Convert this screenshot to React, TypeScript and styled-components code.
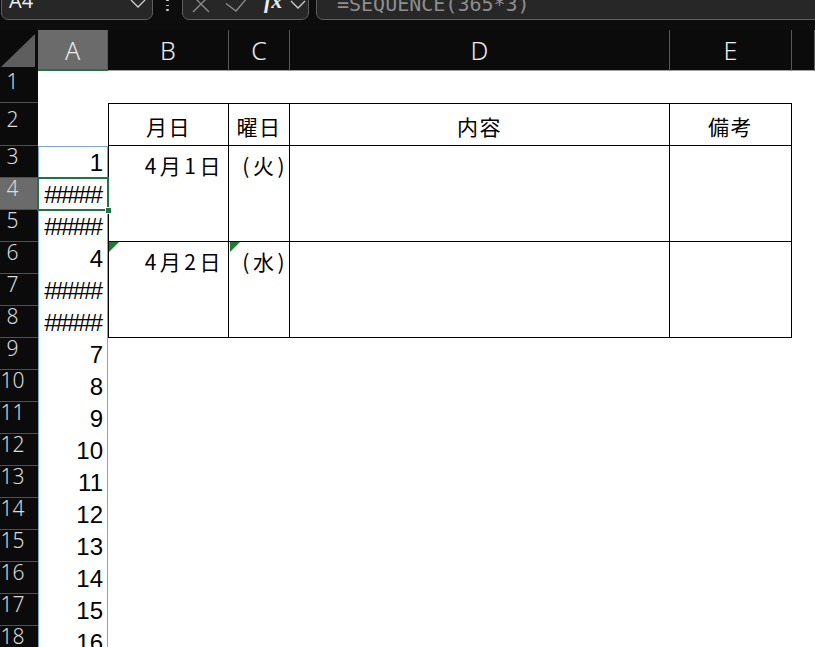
import React from 'react';
import styled, { createGlobalStyle, css } from 'styled-components';

const GlobalStyle = createGlobalStyle`
  html, body {
    margin: 0;
    padding: 0;
    background: #0d0d0d;
    overflow: hidden;
  }
`;

// column widths: row heads, A, B, C, D, E, F...
const COLS = '38px 70px 121px 61px 380px 122px 1fr';

const Window = styled.div`
  width: 815px;
  height: 647px;
  overflow: hidden;
  background: #0d0d0d;
  display: flex;
  flex-direction: column;
`;

/* ---------- formula bar ---------- */

const FormulaBar = styled.div`
  flex: none;
  height: 20px;
  display: flex;
  align-items: flex-end;
  overflow: hidden;
  padding-left: 1px;
`;

const Field = styled.div<{ $width?: number }>`
  box-sizing: border-box;
  flex: ${p => (p.$width ? `0 0 ${p.$width}px` : '1 1 auto')};
  height: 32px;
  display: flex;
  align-items: flex-end;
  background: #272727;
  border: 1px solid #5f5f5f;
  border-radius: 7px;
`;

const NameText = styled.span`
  padding-left: 7px;
  margin-bottom: 8px;
  font: 400 20px/20px 'Open Sans', 'Noto Sans', sans-serif;
  color: #f2f2f2;
`;

const Chevron = styled.svg<{ $right: number; $bottom: number }>`
  flex: none;
  margin-left: auto;
  margin-right: ${p => p.$right}px;
  margin-bottom: ${p => p.$bottom}px;
`;

const Ellipsis = styled.div`
  flex: 0 0 29px;
  align-self: stretch;
  box-sizing: border-box;
  display: flex;
  flex-direction: column;
  align-items: center;
  justify-content: flex-end;
  gap: 3.5px;
  padding-bottom: 9.5px;
`;

const Dot = styled.span`
  width: 3px;
  height: 3px;
  border-radius: 1px;
  background: #d0d0d0;
`;

const ToolIcon = styled.svg<{ $left: number; $bottom: number }>`
  flex: none;
  margin-left: ${p => p.$left}px;
  margin-bottom: ${p => p.$bottom}px;
`;

const FxLabel = styled.span`
  margin-left: 17px;
  margin-bottom: 7px;
  font: italic 700 22px/22px 'Liberation Serif', 'DejaVu Serif', serif;
  color: #ececec;
`;

const FormulaField = styled(Field)`
  margin-left: 7px;
  margin-right: -20px;
`;

const FormulaText = styled.span`
  padding-left: 20px;
  margin-bottom: 5px;
  font: 400 20px/20px 'DejaVu Sans Mono', monospace;
  color: #8e8e8e;
  white-space: nowrap;
`;

/* ---------- column headings ---------- */

const ColumnHeads = styled.div`
  flex: none;
  display: grid;
  grid-template-columns: ${COLS};
  height: 41px;
  margin-top: 10px;
  background: #0b0b0b;
`;

const Corner = styled.div`
  display: flex;
`;

const ColHead = styled.div<{ $active?: boolean }>`
  box-sizing: border-box;
  display: flex;
  align-items: center;
  justify-content: center;
  background: ${p => (p.$active ? '#6b6b6b' : 'transparent')};
  border-right: 1px solid #595959;
  border-bottom: ${p => (p.$active ? '2px solid #217346' : '1px solid #a3a3a3')};
  font: 300 25px 'Noto Sans', 'Open Sans', sans-serif;
  color: #ececec;
`;

/* ---------- cells ---------- */

const SheetBody = styled.div`
  flex: 1;
  min-height: 0;
  overflow: hidden;
  display: grid;
  grid-template-columns: ${COLS};
  grid-template-rows: 32px 43px repeat(16, 32px);
  background: #ffffff;
`;

const RowHead = styled.div<{ $row: number; $active?: boolean }>`
  grid-column: 1;
  grid-row: ${p => p.$row};
  box-sizing: border-box;
  display: flex;
  align-items: center;
  justify-content: center;
  padding: 0 13px 10px 0;
  background: ${p => (p.$active ? '#6b6b6b' : '#0b0b0b')};
  border-bottom: 1px solid #4f4f4f;
  font: 300 21px/21px 'Noto Sans', 'Open Sans', sans-serif;
  color: #dadada;
`;

const SpillRange = styled.div`
  grid-column: 2;
  grid-row: 3 / span 16;
  display: flex;
  flex-direction: column;
  box-shadow: inset 1px 1px 0 #7aa6da, inset -1px 0 0 #7aa6da;
`;

const ValueCell = styled.div<{ $active?: boolean; $hashed?: boolean }>`
  position: relative;
  flex: 0 0 32px;
  box-sizing: border-box;
  display: flex;
  align-items: flex-end;
  justify-content: flex-end;
  padding: 0 ${p => (p.$hashed ? '7px' : '5px')} 2px 0;
  font: 400 24px/26px 'Liberation Sans', Arial, sans-serif;
  letter-spacing: ${p => (p.$hashed ? '-2px' : '0')};
  color: #000;

  ${p =>
    p.$active &&
    css`
      z-index: 1;
      box-shadow: 0 0 0 1px #217346, inset 0 0 0 1px #217346;

      &::after {
        content: '';
        position: absolute;
        right: -3px;
        bottom: -3px;
        width: 5px;
        height: 5px;
        background: #217346;
        outline: 1px solid #ffffff;
      }
    `}
`;

const HeadCell = styled.div<{ $col: number; $lead?: boolean }>`
  grid-column: ${p => p.$col};
  grid-row: 2;
  box-sizing: border-box;
  display: flex;
  align-items: center;
  justify-content: center;
  padding-top: 4px;
  border-top: 1px solid #000;
  border-right: 1px solid #000;
  border-bottom: 1px solid #000;
  border-left: ${p => (p.$lead ? '1px solid #000' : 'none')};
  font: 400 21px/1 'Noto Sans CJK JP', 'Noto Sans', sans-serif;
  letter-spacing: 1.5px;
  color: #000;
`;

const BodyCell = styled.div<{ $col: number; $row: number; $lead?: boolean; $pad?: number; $flag?: boolean }>`
  position: relative;
  grid-column: ${p => p.$col};
  grid-row: ${p => p.$row} / span 3;
  box-sizing: border-box;
  padding: 9px ${p => p.$pad ?? 4}px 0 0;
  border-right: 1px solid #000;
  border-bottom: 1px solid #000;
  border-left: ${p => (p.$lead ? '1px solid #000' : 'none')};
  text-align: right;
  font: 400 21px/1 'Noto Sans CJK JP', 'Noto Sans', sans-serif;
  letter-spacing: 3.5px;
  color: #000;

  ${p =>
    p.$flag &&
    css`
      &::before {
        content: '';
        position: absolute;
        top: 0;
        left: ${p.$lead ? '0' : '1px'};
        width: 0;
        height: 0;
        border-top: 10px solid #1e7b2e;
        border-right: 10px solid transparent;
      }
    `}
`;

const columns = ['A', 'B', 'C', 'D', 'E', ''];
const rowNumbers = Array.from({ length: 18 }, (_, i) => i + 1);

// SEQUENCE(365*3) spilled down column A from row 3
const spillValues = ['1', '#####', '#####', '4', '#####', '#####', '7', '8', '9', '10', '11', '12', '13', '14', '15', '16'];

const schedule = [
  { row: 3, date: '4月1日', day: '(火)', flag: false },
  { row: 6, date: '4月2日', day: '(水)', flag: true },
];

const Down = ({ right, bottom }: { right: number; bottom: number }) => (
  <Chevron $right={right} $bottom={bottom} width="16" height="10" viewBox="0 0 16 10">
    <polyline points="1,1 8,8 15,1" fill="none" stroke="#cfcfcf" strokeWidth="1.3" />
  </Chevron>
);

const App: React.FC = () => {
  return (
    <Window>
      <GlobalStyle />
      <FormulaBar>
        <Field $width={152}>
          <NameText>A4</NameText>
          <Down right={6} bottom={10} />
        </Field>
        <Ellipsis>
          <Dot />
          <Dot />
          <Dot />
        </Ellipsis>
        <Field $width={127}>
          <ToolIcon $left={9} $bottom={6} width="18" height="18" viewBox="0 0 18 18">
            <path d="M1 1 L17 17 M17 1 L1 17" stroke="#8a8a8a" strokeWidth="1.4" fill="none" />
          </ToolIcon>
          <ToolIcon $left={15} $bottom={7} width="22" height="22" viewBox="0 0 22 22">
            <polyline points="1,13.5 11,21 22,8" stroke="#8a8a8a" strokeWidth="1.4" fill="none" />
          </ToolIcon>
          <FxLabel>fx</FxLabel>
          <Down right={2} bottom={9} />
        </Field>
        <FormulaField>
          <FormulaText>=SEQUENCE(365*3)</FormulaText>
        </FormulaField>
      </FormulaBar>

      <ColumnHeads>
        <Corner>
          <svg width="38" height="41" viewBox="0 0 38 41">
            <polygon points="1,37 35,37 35,4" fill="#5e5e5e" />
          </svg>
        </Corner>
        {columns.map((c, i) => (
          <ColHead key={i} $active={c === 'A'}>{c}</ColHead>
        ))}
      </ColumnHeads>

      <SheetBody>
        {rowNumbers.map(n => (
          <RowHead key={n} $row={n} $active={n === 4}>{n}</RowHead>
        ))}

        <SpillRange>
          {spillValues.map((v, i) => (
            <ValueCell key={i} $active={i === 1} $hashed={v.startsWith('#')}>{v}</ValueCell>
          ))}
        </SpillRange>

        <HeadCell $col={3} $lead>月日</HeadCell>
        <HeadCell $col={4}>曜日</HeadCell>
        <HeadCell $col={5}>内容</HeadCell>
        <HeadCell $col={6}>備考</HeadCell>

        {schedule.map(item => (
          <React.Fragment key={item.row}>
            <BodyCell $col={3} $row={item.row} $lead $flag={item.flag}>{item.date}</BodyCell>
            <BodyCell $col={4} $row={item.row} $pad={1} $flag={item.flag}>{item.day}</BodyCell>
            <BodyCell $col={5} $row={item.row} />
            <BodyCell $col={6} $row={item.row} />
          </React.Fragment>
        ))}
      </SheetBody>
    </Window>
  );
};

export default App;
